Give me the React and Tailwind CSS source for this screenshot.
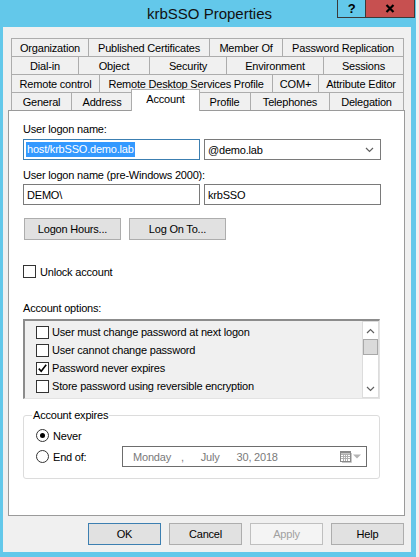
import React from "react";

const font = "font-['Liberation_Sans',Arial,sans-serif]";

const tabRows = [
  [
    { label: "Organization", w: "w-[78px]" },
    { label: "Published Certificates", w: "w-[122px]" },
    { label: "Member Of", w: "w-[74px]" },
    { label: "Password Replication", w: "w-[122px]" },
  ],
  [
    { label: "Dial-in", w: "w-[68px]" },
    { label: "Object", w: "w-[72px]" },
    { label: "Security", w: "w-[78px]" },
    { label: "Environment", w: "w-[98px]" },
    { label: "Sessions", w: "w-[81px]" },
  ],
  [
    { label: "Remote control", w: "w-[89px]" },
    { label: "Remote Desktop Services Profile", w: "w-[174px]" },
    { label: "COM+", w: "w-[47px]" },
    { label: "Attribute Editor", w: "w-[86px]" },
  ],
  [
    { label: "General", w: "w-[61px]" },
    { label: "Address", w: "w-[62px]" },
    { label: "Account", w: "w-[69px]", active: true },
    { label: "Profile", w: "w-[53px]" },
    { label: "Telephones", w: "w-[80px]" },
    { label: "Delegation", w: "w-[75px]" },
  ],
];

const Tab = ({ tab, first }) => {
  if (tab.active) {
    return (
      <div
        className={`relative z-10 -mt-[3px] -ml-[2px] -mr-px flex h-[22px] shrink-0 justify-center border border-b-0 border-[#acacac] bg-white pt-[2px] ${tab.w}`}
      >
        {tab.label}
      </div>
    );
  }
  return (
    <div
      className={`flex h-[18px] shrink-0 items-center justify-center border border-b-0 border-[#acacac] bg-[#f0f0f0] ${first ? "" : "-ml-px"} ${tab.w}`}
    >
      {tab.label}
    </div>
  );
};

const CheckBox = ({ checked }) => (
  <div className="flex size-[13px] shrink-0 items-center justify-center border border-[#333333] bg-white">
    {checked && (
      <svg width="11" height="11" viewBox="0 0 11 11">
        <path d="M1.8 5.6 L4.2 8.2 L9.2 1.8" fill="none" stroke="#000" strokeWidth="1.6" />
      </svg>
    )}
  </div>
);

const Radio = ({ checked }) => (
  <div className="flex size-[13px] shrink-0 items-center justify-center rounded-full border border-[#333333] bg-white">
    {checked && <div className="size-[5px] rounded-full bg-black" />}
  </div>
);

const Chevron = ({ up }) => (
  <svg width="9" height="6" viewBox="0 0 9 6">
    <path
      d={up ? "M1 5 L4.5 1.5 L8 5" : "M1 1 L4.5 4.5 L8 1"}
      fill="none"
      stroke="#606060"
      strokeWidth="1.2"
    />
  </svg>
);

const DlgButton = ({ children, primary, disabled, w = "w-[73px]" }) => (
  <div
    className={cn(
      "flex h-[22px] shrink-0 items-center justify-center border",
      w,
      primary && "border-[#3c7fb1] bg-[#e1e1e1]",
      disabled && "border-[#bfbfbf] bg-[#f4f4f4] text-[#a0a0a0]",
      !primary && !disabled && "border-[#adadad] bg-[#e1e1e1]",
    )}
  >
    {children}
  </div>
);

function cn(...parts) {
  return parts.filter(Boolean).join(" ");
}

const options = [
  { label: "User must change password at next logon" },
  { label: "User cannot change password" },
  { label: "Password never expires", checked: true },
  { label: "Store password using reversible encryption" },
];

export default function App() {
  return (
    <div className={`flex h-[557px] w-[419px] bg-[#f0f0f0] text-[11px] leading-[14px] tracking-[-0.2px] text-black ${font}`}>
      {/* window frame */}
      <div className="flex h-[557px] w-[416px] flex-col bg-[#63c8ea]">
        {/* title bar */}
        <div className="flex h-[27px] shrink-0 items-start">
          <div className="mt-[5px] ml-[147px] text-[15px] leading-[18px] tracking-normal text-[#111]">
            krbSSO Properties
          </div>
          <div className="mr-px ml-auto flex">
            <div className="flex h-[18px] w-[29px] items-center justify-center border border-t-0 border-[#3a3a3a] text-[13px] font-bold text-black">
              ?
            </div>
            <div className="flex h-[18px] w-[49px] items-center justify-center border border-t-0 border-l-0 border-[#3a3a3a] bg-[#c75050]">
              <svg width="10" height="9" viewBox="0 0 10 9">
                <path d="M1.5 1 L8.5 8 M8.5 1 L1.5 8" stroke="#000" strokeWidth="2.2" />
              </svg>
            </div>
          </div>
        </div>

        {/* client area */}
        <div className="ml-[3px] flex h-[525px] w-[408px] flex-col bg-[#f0f0f0]">
          {/* tab strip */}
          <div className="mt-[11px] ml-[8px] flex flex-col">
            {tabRows.map((row, ri) => (
              <div key={ri} className="flex h-[18px]">
                {row.map((tab, i) => (
                  <Tab key={tab.label} tab={tab} first={i === 0} />
                ))}
              </div>
            ))}
          </div>

          {/* tab page */}
          <div className="ml-[5px] flex h-[406px] w-[397px] flex-col border border-[#9a9a9a] bg-white pt-[11px] pl-[14px]">
            <div>User logon name:</div>
            <div className="mt-[3px] flex gap-[4px]">
              <div className="flex h-[21px] w-[177px] items-center border border-[#3c7fb1] bg-white pl-[2px]">
                <span className="bg-[#3399ff] px-px leading-[15px] text-white">host/krbSSO.demo.lab</span>
              </div>
              <div className="flex h-[21px] w-[177px] items-center justify-between border border-[#7a7a7a] bg-white pr-[6px] pl-[3px]">
                <span>@demo.lab</span>
                <Chevron />
              </div>
            </div>

            <div className="mt-[8px]">User logon name (pre-Windows 2000):</div>
            <div className="mt-[2px] flex gap-[4px]">
              <div className="flex h-[21px] w-[177px] items-center border border-[#7a7a7a] bg-white pl-[3px]">
                DEMO\
              </div>
              <div className="flex h-[21px] w-[177px] items-center border border-[#7a7a7a] bg-white pl-[3px]">
                krbSSO
              </div>
            </div>

            <div className="mt-[13px] ml-px flex gap-[8px]">
              <DlgButton w="w-[97px]">Logon Hours...</DlgButton>
              <DlgButton w="w-[97px]">Log On To...</DlgButton>
            </div>

            <div className="mt-[25px] flex h-[13px] items-center gap-[4px]">
              <CheckBox />
              <span>Unlock account</span>
            </div>

            <div className="mt-[23px]">Account options:</div>
            <div className="mt-[4px] flex h-[80px] w-[357px] border-t-2 border-r border-b border-l-2 border-t-[#8c8c8c] border-r-[#e3e3e3] border-b-[#e3e3e3] border-l-[#8c8c8c] bg-[#f0f0f0]">
              <div className="flex flex-1 flex-col pt-[2px] pl-[11px]">
                {options.map((o) => (
                  <div key={o.label} className="flex h-[18px] items-center gap-[3px]">
                    <CheckBox checked={o.checked} />
                    <span>{o.label}</span>
                  </div>
                ))}
              </div>
              <div className="flex w-[17px] flex-col border border-[#dcdcdc] bg-white">
                <div className="flex h-[17px] items-center justify-center">
                  <Chevron up />
                </div>
                <div className="h-[16px] border border-[#a8a8a8] bg-[#dadada]" />
                <div className="flex-1" />
                <div className="flex h-[17px] items-center justify-center">
                  <Chevron />
                </div>
              </div>
            </div>

            {/* account expires group */}
            <div className="relative mt-[16px] flex h-[64px] w-[357px] flex-col rounded-[3px] border border-[#dcdcdc] pl-[12px]">
              <div className="absolute -top-[8px] left-[8px] bg-white px-px">Account expires</div>
              <div className="mt-[13px] flex h-[13px] items-center gap-[4px]">
                <Radio checked />
                <span>Never</span>
              </div>
              <div className="mt-[4px] flex h-[21px] items-center">
                <Radio />
                <span className="ml-[4px] w-[69px]">End of:</span>
                <div className="flex h-[21px] w-[245px] items-center border border-[#6d6d6d] bg-white pl-[10px] text-[#7a7a7a]">
                  <span>Monday</span>
                  <span className="ml-[10px]">,</span>
                  <span className="ml-[17px]">July</span>
                  <span className="ml-[17px]">30, 2018</span>
                  <div className="ml-auto mr-[5px] flex items-center gap-px">
                    <svg width="12" height="12" viewBox="0 0 12 12">
                      <rect x="0.5" y="0.5" width="10" height="10" fill="#fff" stroke="#8a8a8a" />
                      <path d="M1 3.5 H10 M1 5.5 H10 M1 7.5 H10 M3.5 3 V10 M5.5 3 V10 M7.5 3 V10" stroke="#b0b0b0" strokeWidth="1" />
                      <path d="M1 1 H10 V2.5 H1 Z" fill="#8a8a8a" />
                      <path d="M11.5 2 V11.5 H2" fill="none" stroke="#c8c8c8" />
                    </svg>
                    <svg width="8" height="5" viewBox="0 0 8 5">
                      <path d="M0 0.5 H8 L4 4.5 Z" fill="#b4b4b4" />
                    </svg>
                  </div>
                </div>
              </div>
            </div>
          </div>

          {/* dialog buttons */}
          <div className="mt-[7px] flex gap-[8px] pl-[85px]">
            <DlgButton primary>OK</DlgButton>
            <DlgButton>Cancel</DlgButton>
            <DlgButton disabled>Apply</DlgButton>
            <DlgButton>Help</DlgButton>
          </div>
        </div>
      </div>
      <div className="w-[3px]" />
    </div>
  );
}
